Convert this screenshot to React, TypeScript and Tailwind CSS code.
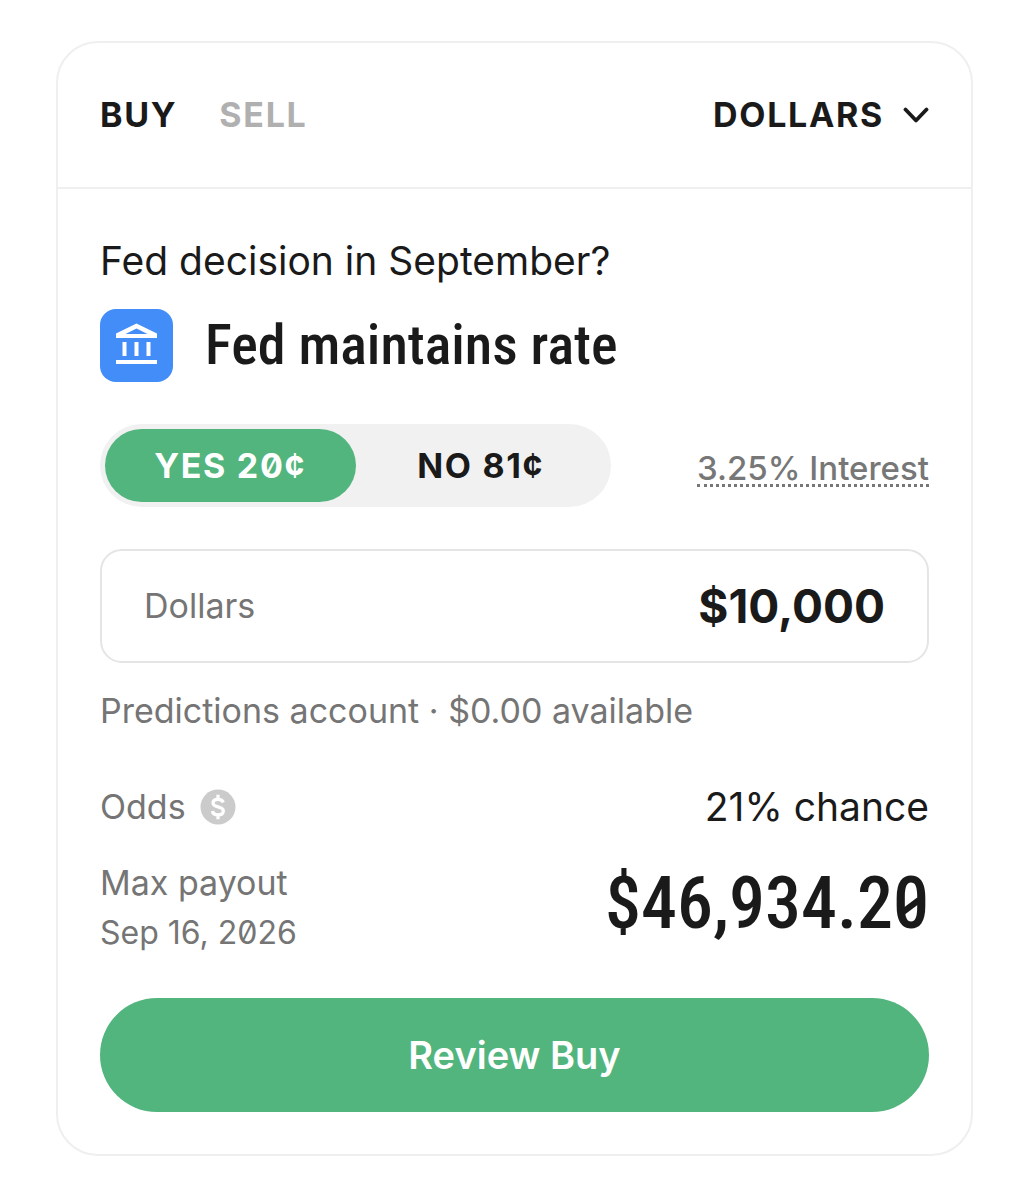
import { useState } from "react";

function BankIcon() {
  return (
    <svg viewBox="0 0 73 73" className="size-full" fill="none" aria-hidden="true">
      <path fill="#fff" fillRule="evenodd" d="M16 24.5 36.5 14.500 57 24.500V29H16v-4.500ZM25.500 25h22L36.500 19.500 25.500 25Z" />
      <path fill="#fff" d="M22.500 33h4v14h-4zM34.500 33h4v14h-4zM46.500 33h4v14h-4zM16 51h41v4H16z" />
    </svg>
  );
}

function CoinIcon() {
  return (
    <svg viewBox="0 0 36 36" className="size-9" fill="none" aria-hidden="true">
      <circle cx="18" cy="18" r="17.500" fill="#cbcbcb" />
      <path
        d="M23.200 13.500c-.5-2-2.400-3.200-5.200-3.200-3.100 0-5 1.500-5 3.700 0 2.500 2.200 3.200 5 3.900 3 .7 5.300 1.500 5.300 4 0 2.400-2.100 3.900-5.300 3.900-3.100 0-5.200-1.400-5.500-3.800M18 5.800v4.500M18 25.800v4.400"
        stroke="#fff"
        strokeWidth="3.300"
      />
    </svg>
  );
}

function SlashedZero() {
  return (
    <span className="relative inline-block">
      0
      <svg viewBox="0 0 36 92" className="absolute inset-0 size-full" fill="none" aria-hidden="true">
        <path d="M10 54 26 42" stroke="#1a1a1a" strokeWidth="6" />
      </svg>
    </span>
  );
}

export default function App() {
  const [tab, setTab] = useState("buy");
  const [side, setSide] = useState("yes");
  const [amount, setAmount] = useState("$10,000");

  return (
    <main className="min-h-screen bg-white pt-[41px] pr-10 pb-11 pl-14 font-['Inter',sans-serif] text-[#1a1a1a]">
      <section className="rounded-[42px] border-2 border-[#efefef]">
        <header className="flex items-center justify-between border-b-2 border-[#efefef] px-[42px] py-12 text-[34px] leading-12 font-bold">
          <div className="flex gap-[42px]">
            <button
              type="button"
              onClick={() => setTab("buy")}
              className={tab === "buy" ? "tracking-wider" : "tracking-wider text-[#b0b0b0]"}
            >
              BUY
            </button>
            <button
              type="button"
              onClick={() => setTab("sell")}
              className={tab === "sell" ? "tracking-wider" : "tracking-wider text-[#b0b0b0]"}
            >
              SELL
            </button>
          </div>
          <div className="relative">
            <select
              aria-label="Order unit"
              defaultValue="DOLLARS"
              className="appearance-none bg-transparent pr-11 tracking-wider outline-none"
            >
              <option>DOLLARS</option>
            </select>
            <svg
              viewBox="0 0 26 16"
              className="pointer-events-none absolute top-4 right-0 h-4 w-[26px]"
              fill="none"
              aria-hidden="true"
            >
              <path d="m2.500 2.500 10.500 11L23.500 2.500" stroke="#1a1a1a" strokeWidth="3.800" strokeLinecap="round" strokeLinejoin="round" />
            </svg>
          </div>
        </header>

        <div className="px-[42px] pt-12 pb-[42px]">
          <p className="text-[39px] leading-12">Fed decision in September?</p>

          <div className="mt-6 flex items-center gap-8">
            <div className="size-[73px] shrink-0 rounded-2xl bg-[#428df8]">
              <BankIcon />
            </div>
            <h1 className="font-['Roboto_Condensed',sans-serif] text-[56px] leading-[73px] font-medium">
              Fed maintains rate
            </h1>
          </div>

          <div className="mt-[42px] flex items-center justify-between">
            <div className="flex w-[511px] rounded-full bg-[#f1f1f1] p-[5px] text-[34px] leading-[73px] font-bold">
              <button
                type="button"
                onClick={() => setSide("yes")}
                className={
                  side === "yes"
                    ? "flex-1 rounded-full bg-[#52b57e] tracking-wider text-white [font-feature-settings:'zero']"
                    : "flex-1 rounded-full tracking-wider [font-feature-settings:'zero']"
                }
              >
                YES 20¢
              </button>
              <button
                type="button"
                onClick={() => setSide("no")}
                className={
                  side === "no"
                    ? "flex-1 rounded-full bg-[#52b57e] tracking-wider text-white"
                    : "flex-1 rounded-full tracking-wider"
                }
              >
                NO 81¢
              </button>
            </div>
            <a href="#interest" className="mt-2 border-b-3 border-dotted border-[#777] text-[33px] leading-8 font-medium text-[#777]">
              3.25% Interest
            </a>
          </div>

          <div className="mt-[42px] flex items-center rounded-[22px] border-2 border-[#e5e5e5] px-[42px] py-[27px]">
            <label htmlFor="amount" className="text-[34px] leading-14 text-[#757575]">
              Dollars
            </label>
            <input
              id="amount"
              type="text"
              value={amount}
              onChange={(e) => setAmount(e.target.value)}
              className="min-w-0 flex-1 bg-transparent text-right text-[46px] leading-14 font-bold outline-none"
            />
          </div>

          <p className="mt-6 text-[34px] leading-12 text-[#757575]">
            Predictions account · $0.00 available
          </p>

          <div className="mt-12 flex items-center justify-between">
            <div className="flex items-center gap-3.5 text-[34px] leading-12 text-[#757575]">
              Odds
              <CoinIcon />
            </div>
            <span className="text-[39px] leading-12">21% chance</span>
          </div>

          <div className="mt-[27px] flex items-start justify-between">
            <div className="text-[#757575]">
              <p className="text-[34px] leading-[50px]">Max payout</p>
              <p className="text-[32px] leading-[50px] [font-feature-settings:'zero']">Sep 16, 2026</p>
            </div>
            <strong className="font-['Roboto_Condensed',sans-serif] text-[72px] leading-[92px] font-medium">
              $46,934.2
              <SlashedZero />
            </strong>
          </div>

          <button type="button" className="mt-10 w-full rounded-full bg-[#52b57e] py-8 text-[38px] leading-[50px] font-semibold text-white">
            Review Buy
          </button>
        </div>
      </section>
    </main>
  );
}
